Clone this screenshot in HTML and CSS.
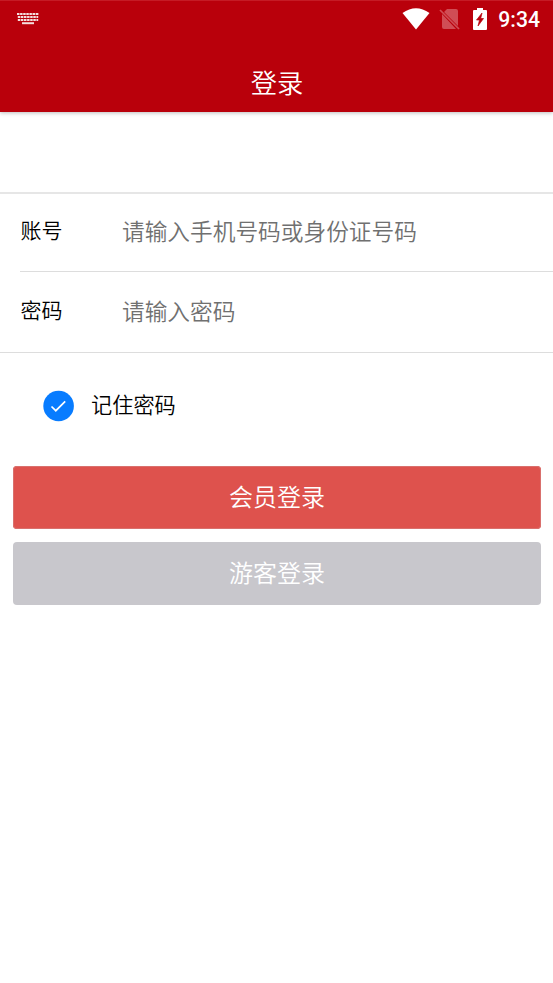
FILE: index.html
```html
<!DOCTYPE html>
<html lang="zh-CN">
<head>
<meta charset="utf-8">
<title>登录</title>
<link rel="stylesheet" href="styles.css">
</head>
<body>
<header class="header">
  <div class="status">
    <svg class="keyboard" width="22" height="13" viewBox="0 0 22 13"><path d="M0 2H22M.8 5H21.2M.8 8H21.2" stroke="#f4dede" stroke-width="2.2" stroke-dasharray="2.5 .6"/><path d="M5 11.2H17" stroke="#f4dede" stroke-width="2"/></svg>
    <svg class="wifi" width="28" height="22" viewBox="0 0 28 22"><path d="M.5 5Q14-4.5 27.5 5L14 21.5Z" fill="#fff"/></svg>
    <svg class="sim" width="22" height="22" viewBox="0 0 22 22"><path d="M8 1H17Q19 1 19 3V18L5 4ZM3 6L17 21H5Q3 21 3 19Z" fill="#d04d55"/><path d="M1 2L20 21" stroke="#d04d55" stroke-width="1.7"/></svg>
    <svg class="battery" width="14" height="22" viewBox="0 0 14 22"><path d="M4 0H10V2H13Q14 2 14 3V21Q14 22 13 22H1Q0 22 0 21V3Q0 2 1 2H4Z" fill="#fff"/><path d="M9 5L3.5 12H6.5L5 18L10.5 10.5H7.7Z" fill="#b9000b" stroke="#b9000b" stroke-width=".7"/></svg>
    <span class="time">9:34</span>
  </div>
  <h1 class="title">登录</h1>
</header>
<main>
  <form class="fields">
    <label class="row"><span class="label">账号</span><input class="input" placeholder="请输入手机号码或身份证号码"></label>
    <label class="row"><span class="label">密码</span><input class="input" type="password" placeholder="请输入密码"></label>
  </form>
  <div class="remember"><svg width="32" height="32" viewBox="0 0 32 32"><circle cx="15.6" cy="16" r="15.3" fill="#087cff"/><path d="M8.5 16.5L12.8 20.7L22.2 11.3" fill="none" stroke="#fff" stroke-width="1.7"/></svg><span class="remember-text">记住密码</span></div>
  <div class="actions"><button class="button member">会员登录</button><button class="button guest">游客登录</button></div>
</main>
</body>
</html>
```
FILE: styles.css
```css
* { box-sizing: border-box; }
body { margin: 0; background: #fff; color: #000; font-family: "Noto Sans CJK SC", sans-serif; font-weight: 350; }
.header { height: 112px; background: #b9000b; color: #fff; border-top: 1px solid #c51b25; box-shadow: 0 1px 4px #0004; }
.status { height: 36px; display: flex; align-items: center; padding: 0 13px 0 17px; }
.keyboard { margin-top: -2px; }
.wifi { margin-left: auto; margin-top: -1px; }
.sim { margin-left: 9px; margin-top: -1px; }
.battery { margin-left: 12px; margin-top: -1px; }
.time { margin-left: 11px; font: 500 21.2px Roboto, sans-serif; }
.title { margin: 26px 0 0 1px; text-align: center; font-size: 26.3px; line-height: 38px; font-weight: 350; }
.fields { margin-top: 80px; border-top: 2px solid #e6e6e6; border-bottom: 1px solid #ddd; }
.row { display: flex; height: 77px; align-items: center; margin-left: 20px; padding-bottom: 4px; }
.row + .row { height: 81px; border-top: 1px solid #ddd; }
.label { width: 102px; padding: 0 0 3px .5px; font-size: 21px; }
.input { flex: 1; border: 0; padding: 0 0 1px; outline: 0; background: none; font: 350 22.7px "Noto Sans CJK SC", sans-serif; }
.row + .row .input { padding: 1px 0 0; }
.input::placeholder { color: #707070; opacity: 1; }
.remember { height: 113px; padding: 0 0 7px 43px; display: flex; align-items: center; gap: 16px; font-size: 21.2px; }
.remember-text { padding-bottom: 5px; }
.actions { padding: 0 12px 0 13px; display: grid; gap: 13px; }
.button { height: 63px; border: 0; border-radius: 4px; padding: 0 0 5px; color: #fff; font: 350 24px "Noto Sans CJK SC", sans-serif; }
.member { background: #de524d; box-shadow: inset 0 0 0 1px #d9706d; }
.guest { background: #c8c7cc; }
```
